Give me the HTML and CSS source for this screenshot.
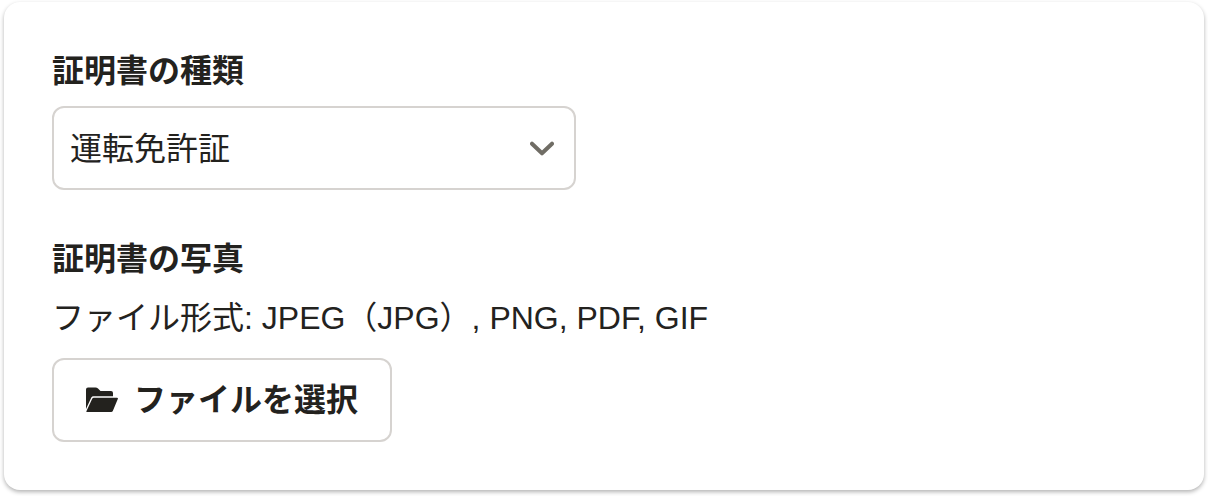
FILE: index.html
```html
<!DOCTYPE html>
<html lang="ja">
<head>
  <meta charset="utf-8">
  <meta name="viewport" content="width=device-width, initial-scale=1">
  <title>証明書</title>
  <link rel="stylesheet" href="styles.css">
</head>
<body>
  <form class="card">
    <div class="field">
      <label class="label" for="kind">証明書の種類</label>
      <div class="select">
        <select class="select-input" id="kind">
          <option>運転免許証</option>
        </select>
        <svg class="select-icon" viewBox="0 0 24 18" aria-hidden="true">
          <path d="M2 4.700 12 14.300 22 4.700"/>
        </svg>
      </div>
    </div>
    <div class="field">
      <h2 class="label" id="photo">証明書の写真</h2>
      <p class="hint" id="formats">ファイル形式: JPEG（JPG）, PNG, PDF, GIF</p>
      <button class="button" type="button" aria-describedby="photo formats">
        <svg class="button-icon" viewBox="0 0 32 26" aria-hidden="true">
          <path d="M0 22V2.500Q0 .5 2 .5H9.500Q11 .5 12 1.500L14.500 4H25Q27 4 27 6V9.200H7.500Q6 9.200 5.300 10.500Z"/>
          <path d="M7.800 10.800H31Q32.300 10.800 31.800 12L26.800 24Q26.300 25 25.200 25H1.200Q0 25 .5 23.900L6.200 11.800Q6.700 10.800 7.800 10.800Z"/>
        </svg>
        <span>ファイルを選択</span>
      </button>
    </div>
  </form>
</body>
</html>
```
FILE: styles.css
```css
* {
  box-sizing: border-box;
}

body {
  margin: 0;
  padding: 2px 4px 6px;
  background: #fff;
  color: #23221e;
  font-family: "Liberation Sans", "Noto Sans CJK JP", sans-serif;
  font-size: 32px;
  line-height: 48px;
}

.card {
  display: flex;
  flex-direction: column;
  gap: 45px;
  padding: 45px 48px 48px;
  border-radius: 16px;
  background: #fff;
  box-shadow: 0 2px 4px rgba(0, 0, 0, 0.3);
}

.field {
  display: flex;
  flex-direction: column;
  align-items: flex-start;
}

.label {
  margin: 0 0 11px;
  font-size: 32px;
  font-weight: 700;
}

.select {
  display: grid;
  align-items: center;
  width: 524px;
  max-width: 100%;
}

.select-input,
.select-icon {
  grid-area: 1 / 1;
}

.select-input,
.button {
  height: 84px;
  border: 2px solid #d6d3d0;
  border-radius: 12px;
  background: #fff;
  color: inherit;
  font: inherit;
}

.select-input {
  width: 100%;
  padding: 2px 64px 0 16px;
  appearance: none;
}

.select-icon {
  justify-self: end;
  width: 24px;
  height: 18px;
  margin-right: 22px;
  fill: none;
  stroke: #706d65;
  stroke-width: 4;
  stroke-linecap: round;
  stroke-linejoin: round;
  pointer-events: none;
}

.hint {
  margin: 0 0 16px;
}

.button {
  display: flex;
  align-items: center;
  gap: 16px;
  padding: 0 32px;
  font-weight: 700;
}

.button-icon {
  width: 32px;
  height: 26px;
  fill: currentColor;
}
```
